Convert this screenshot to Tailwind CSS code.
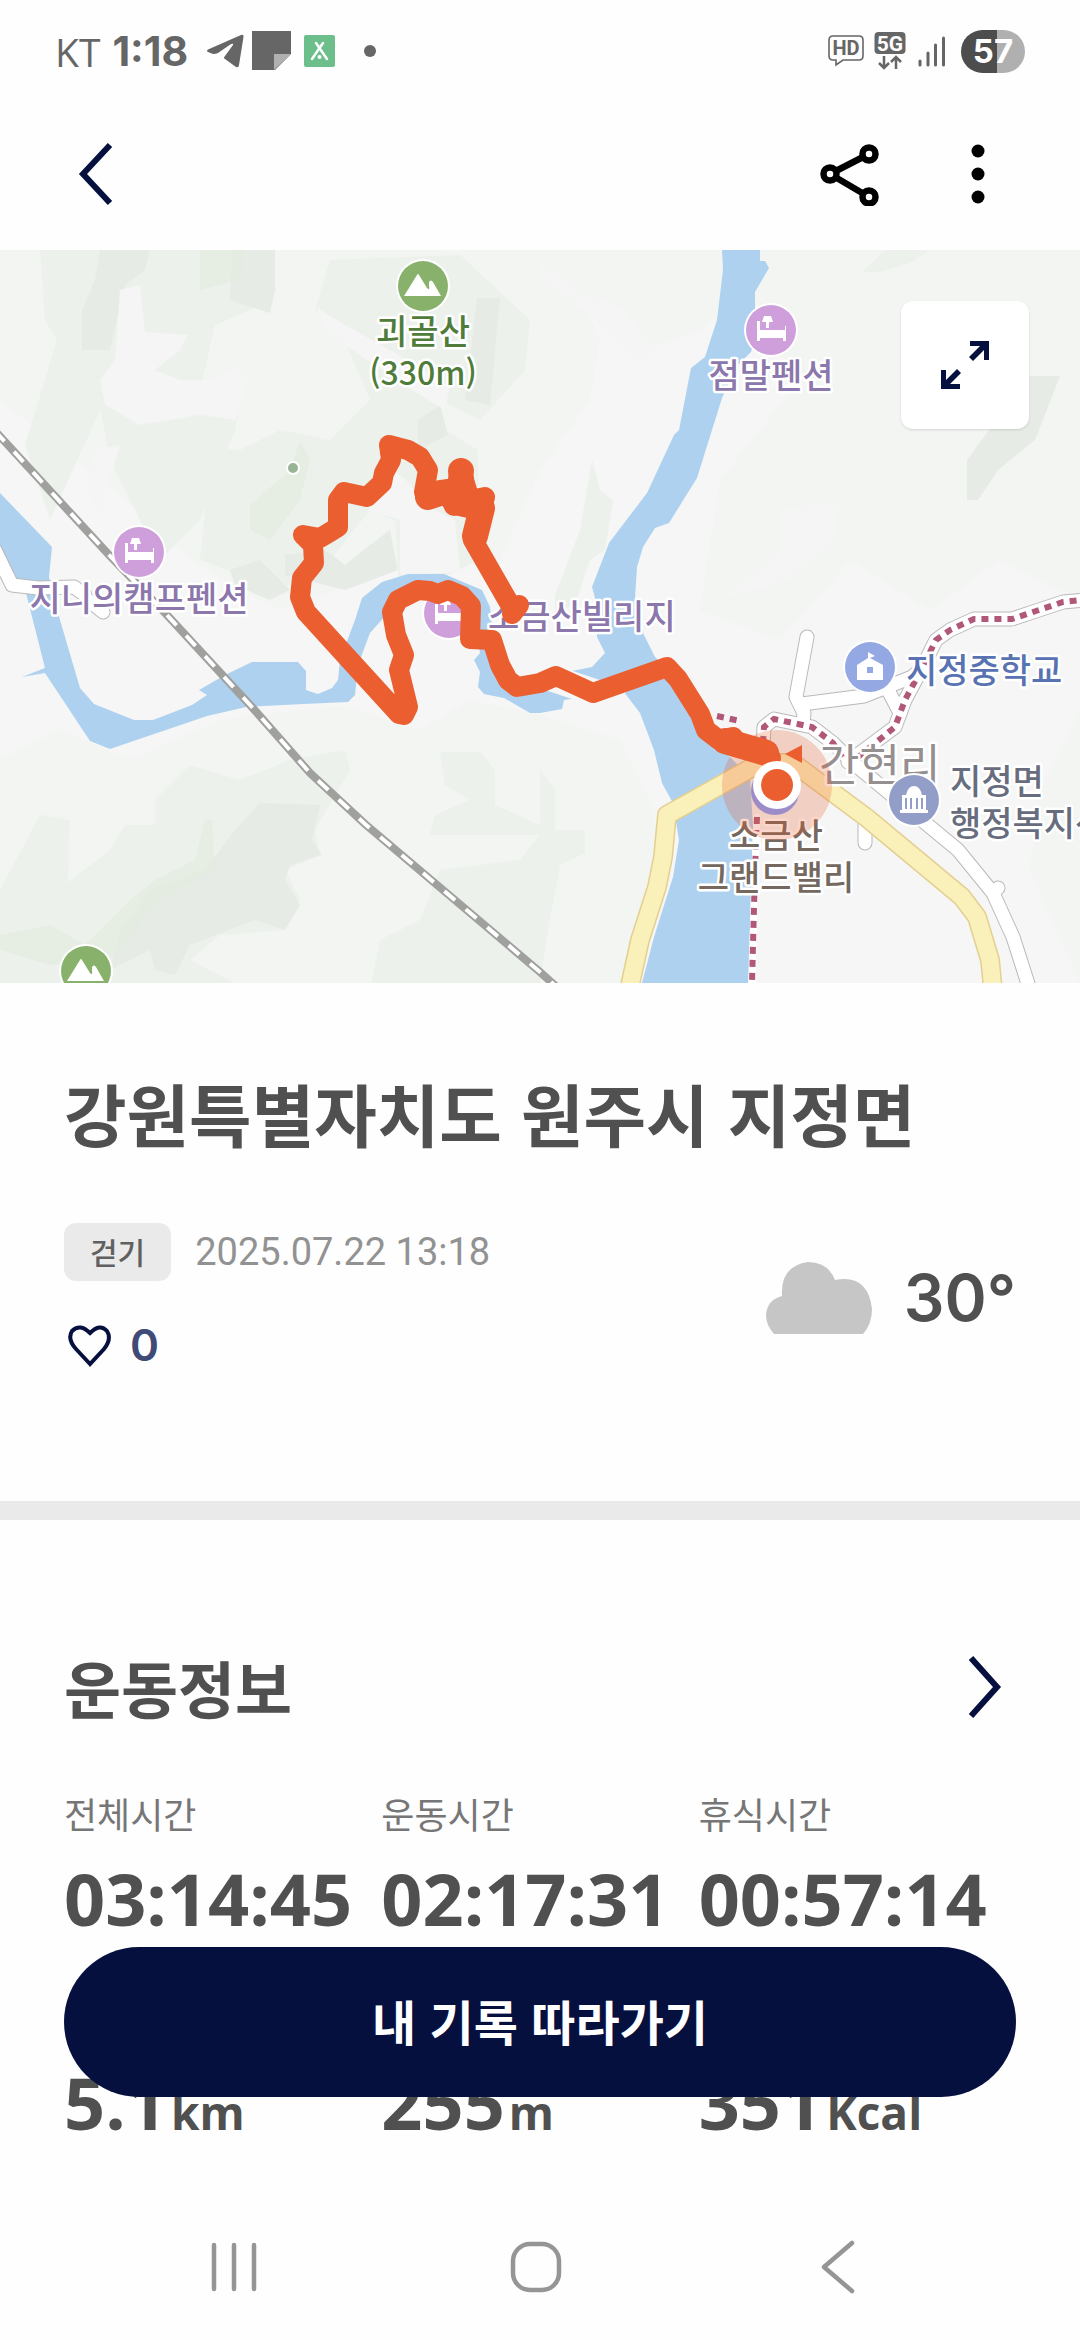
<!DOCTYPE html>
<html lang="ko">
<head>
    <meta charset="UTF-8">
    <meta name="viewport" content="width=device-width, initial-scale=1">
    <script src="https://cdn.jsdelivr.net/npm/@tailwindcss/browser@4"></script>
    <title>강원특별자치도 원주시 지정면</title>
</head>
<body class="min-h-screen flex flex-col bg-[#fefefe] text-[#505050] font-['Noto_Sans_CJK_KR',sans-serif]">

    <!-- status bar -->
    <div class="flex items-center justify-between h-[102px] pl-[55px] pr-[55px] text-[#666] font-['Inter',sans-serif]">
        <div class="flex items-center">
            <span class="text-[39px] leading-none font-normal font-['Open_Sans',sans-serif]">KT</span>
            <span class="ml-3 text-[41px] leading-none font-bold">1:18</span>
            <svg class="ml-[18px] w-[38px] h-[34px]" viewBox="0 0 38 34" fill="currentColor"><path d="M35 1 Q38 0 37.500 3 L33 31 Q32.500 34 30 33 L19 25 Q17 24 19 22 L27 11 Q28 9 25 10 L12 19 Q10 20 7 20 L2 18 Q0 17 2 15.500 Z"/></svg>
            <svg class="ml-2 w-10 h-10" viewBox="0 0 40 40"><path fill="#666" d="M0 0H39V23L23 39H0Z"/><path fill="#b0b0b0" d="M22 23H39L22 39Z"/></svg>
            <svg class="ml-3 w-8 h-8" viewBox="0 0 32 32"><rect width="31" height="32" rx="2" fill="#6cbe8b"/><path d="M8 24L19 8M23 24L12 8" stroke="#fff" stroke-width="2.500" stroke-linecap="round"/><circle cx="15.500" cy="22" r="2" fill="#fff"/></svg>
            <span class="ml-7 size-3 rounded-full bg-[#666]"></span>
        </div>
        <div class="flex items-center">
            <svg class="w-9 h-8" viewBox="0 0 36 32"><path d="M5 1H31Q35 1 35 5V21Q35 25 31 25H15L8 30V25H5Q1 25 1 21V5Q1 1 5 1Z" fill="none" stroke="#666" stroke-width="1.600"/><text x="18" y="20" text-anchor="middle" font-size="20" font-weight="700" font-family="Roboto, sans-serif" fill="#666">HD</text></svg>
            <svg class="ml-[10px] w-8 h-[38px]" viewBox="0 0 32 38"><rect x="0.500" width="31" height="22" rx="4" fill="#666"/><text x="16" y="19" text-anchor="middle" font-size="21" font-weight="700" font-family="Roboto, sans-serif" fill="#fff">5G</text><path d="M10 24V36M5 31L10 36L15 31M22 37V25M17 30L22 25L27 30" fill="none" stroke="#666" stroke-width="2.500"/></svg>
            <svg class="ml-3 w-7 h-8" viewBox="0 0 28 32"><path d="M2 26V30M10 18V30M17.500 10V30M25.500 3V30" stroke="#666" stroke-width="3" stroke-linecap="round"/></svg>
            <span class="ml-[15px] flex items-center justify-center w-16 h-[43px] rounded-full text-white text-[33px] leading-none font-bold bg-linear-to-r from-[#4d4d4d] from-57% to-[#b0b0b0] to-57%">57</span>
        </div>
    </div>

    <!-- app bar -->
    <header class="flex items-center justify-between h-[148px] px-[71px] pb-1">
        <button aria-label="뒤로" class="flex justify-center">
            <svg class="w-12 h-16" viewBox="0 0 48 64"><path d="M39 3L12 32L39 61" fill="none" stroke="#06103f" stroke-width="6"/></svg>
        </button>
        <div class="flex items-center gap-[68px]">
            <button aria-label="공유">
                <svg class="w-[62px] h-16" viewBox="0 0 62 64"><path d="M11 32L50 12M11 32L50 55" stroke="#000" stroke-width="6.500"/><g fill="#fff" stroke="#000" stroke-width="6.500"><circle cx="11" cy="32" r="6.500"/><circle cx="50" cy="12" r="6.500"/><circle cx="50" cy="55" r="6.500"/></g></svg>
            </button>
            <button aria-label="더보기">
                <svg class="w-[60px] h-16" viewBox="0 0 60 64"><circle cx="29" cy="9" r="6.500"/><circle cx="29" cy="32" r="6.500"/><circle cx="29" cy="55" r="6.500"/></svg>
            </button>
        </div>
    </header>

    <!-- map -->
    <section class="relative">
        <svg class="block w-full" viewBox="0 250 1080 733" font-family="'Noto Sans CJK KR', sans-serif">
            <defs>
                <g id="bed"><circle r="27" fill="#fff"/><circle r="25" fill="#cf9fdb"/><path fill="#fff" d="M-14 -9H-11V0H14V-4H15V11H12V8H-11V11H-14ZM-7 -14H0L2 -8H-2V-2H-5V-8H-9Z"/></g>
                <g id="mountain"><circle r="27" fill="#fff"/><circle r="25" fill="#88b26c"/><path fill="#fff" d="M-19 10L-6 -11Q-5 -13 -4 -11L4 2Q7 5 6 0L6 -4Q8 -7 10 -4L18 10Z"/></g>
            </defs>
            <rect y="250" width="1080" height="733" fill="#f5f6f5"/>

            <!-- terrain -->
            <path fill="#f2f5f2" d="M0 250H560L600 340L590 400L540 470L500 560L420 560L340 590L280 610L240 590L190 560L160 530L90 470L0 400ZM540 250H1080V600L1000 560L930 610L850 560L780 640L700 610L720 480L800 380L740 300L700 330L640 350L560 290ZM0 760L60 730L130 760L220 720L340 705L420 730L470 700L540 715L620 740L650 800L665 870L640 983H0ZM1080 710L1040 790L1030 870L1080 983Z"/>
            <path fill="#ecf1ec" d="M40 250H270L276 290L250 310L215 325L200 390L245 370L235 430L200 520L160 560L110 460L95 380L125 300L115 290L100 410L50 520L25 445L57 340L45 320ZM185 445L240 450L280 430L330 440L370 400L340 330L315 310L330 260L460 255L530 320L525 370L480 420L440 400L445 430L478 450L478 560L400 600L395 520L370 510L330 560L280 590L200 560L205 510L180 470ZM0 890L40 815L70 820L68 883L110 850L125 825L155 825L155 800L190 765L240 780L290 760L345 750L350 770L315 830L320 855L285 870L300 900L285 930L220 935L190 960L235 983H0ZM440 752H480L495 770L495 805L540 825V990H370L380 940L420 920L440 870L520 860L540 835L430 835L435 815L470 800L445 785ZM540 770L555 790L555 830L585 830V853L560 865L548 930L540 983ZM555 612L555 595L580 530L592 460L600 490L613 500L605 550L590 560L575 605ZM862 272L885 250H930L910 263L880 272Z"/>
            <path fill="#e6ebe6" d="M100 250H150L145 270L125 285L110 350H82V310L95 280ZM232 250H275L275 290L270 313L230 300ZM477 298H500L490 405L465 400ZM260 803L320 805L312 840L322 855L290 865L285 880L300 905L285 930L255 920L190 945L175 975L155 970L150 950L110 970L120 930L150 890L205 870L235 830ZM967 460V500L978 500L998 470L1035 440L1060 376H1030L1000 415ZM285 555L325 550L345 565L370 545L390 530L398 570L345 590L285 575ZM418 420L440 405L448 435L418 450ZM270 600L235 585L230 570L260 560L290 590Z"/>
            <path fill="#e3ede0" opacity=".6" d="M200 250H245L240 280L200 290ZM250 505L290 470L300 440L310 460L300 500L270 540L250 530ZM0 935L50 925L85 945L130 900L155 880L195 860L205 820L212 820L215 870L160 900L110 960L50 965L0 950Z"/>
            <path fill="#f4f5f4" d="M120 290L140 285L145 332L188 335L180 350L155 370L180 380L210 380L240 365L250 375L235 420L200 415L140 425L105 405L100 380L115 360ZM316 307L345 325L390 350L450 385L445 410L420 395L330 335ZM95 450L120 445L100 510L85 490ZM408 482L388 465L384 485L368 510L400 520V575L460 572L455 520L425 505ZM540 260L580 290L625 310L655 350L640 360L590 315L540 280ZM780 510L840 500L835 540L790 580L720 600L780 550Z"/>

            <!-- water -->
            <path fill="#aed1ef" d="M0 493L52 547L49 577L52 590L60 620L80 688L94 704L134 720H153L192 705L207 695L199 690L225 675L252 662H298L306 671V690L318 694L332 688L338 680L340 660L355 620L362 598L382 582L408 574H444L482 590L490 607L494 640L520 680L577 670L592 667L605 653L597 637L595 598L592 587L609 543L647 493L674 435L679 430L691 368L705 357L717 320L723 270L722 250H760V261H765L769 268L755 292V340L751 352L736 367L722 398L697 478L669 523L655 528L643 547L637 567L635 598L643 633L655 657L700 700L712 743L726 753L750 777L753 827L751 893L748 983H642L654 937L673 877L679 840L673 803L662 783L654 750L640 713L624 692L585 697L564 700L562 709L540 713H530L504 698L484 694L478 687L480 672L474 660L480 653L478 640L470 605L450 590L420 592L395 605L370 633L358 665L355 695L348 702L303 704L246 707L207 716L110 749L90 741L45 673L22 677L45 668L26 593L0 570Z"/>
            <path fill="#f5f6f5" d="M485 640L500 685L517 697L545 690L590 705L625 693L640 680L600 680L555 665L520 670L505 655ZM0 560L10 590L24 594L30 620L0 620Z"/>

            <!-- local roads -->
            <g fill="none" stroke-linejoin="round" stroke-linecap="round">
                <g stroke="#b9b9b9" stroke-width="15">
                    <path d="M-5 550L12 585L38 588L74 587L85 595M88 600L103 612"/>
                    <path d="M807 637L796 697L804 713L803 722M802 704L864 696L912 677L926 665M888 690L900 713M865 818V843"/>
                    <path d="M763 750L764 727L774 719L812 727L833 743L853 763L900 802L958 850L993 893L1013 937L1030 990M993 893L998 888"/>
                    <path d="M848 762L895 727L905 700L920 672L936 640L950 630L974 619H1012L1039 610L1063 602L1085 600"/>
                </g>
                <g stroke="#fff" stroke-width="13">
                    <path d="M-5 550L12 585L38 588L74 587L85 595M88 600L103 612"/>
                    <path d="M807 637L796 697L804 713L803 722M802 704L864 696L912 677L926 665M888 690L900 713M865 818V843"/>
                    <path d="M763 750L764 727L774 719L812 727L833 743L853 763L900 802L958 850L993 893L1013 937L1030 990M993 893L998 888"/>
                    <path d="M848 762L895 727L905 700L920 672L936 640L950 630L974 619H1012L1039 610L1063 602L1085 600"/>
                </g>
                <path d="M757 817L755 870L752 990" stroke="#fff" stroke-width="7"/>
            </g>

            <!-- main road -->
            <g fill="none" stroke-linejoin="round">
                <path d="M629 990L640 940L657 887L663 857L667 815L760 763H793L867 818L962 897L977 917L990 960L993 990" stroke="#e4cf90" stroke-width="20"/>
                <path d="M629 990L640 940L657 887L663 857L667 815L760 763H793L867 818L962 897L977 917L990 960L993 990" stroke="#faf0ba" stroke-width="17"/>
            </g>

            <!-- walking trails -->
            <g fill="none" stroke="#b1587a" stroke-width="6" stroke-dasharray="7 6">
                <path d="M763 743L764 727L774 719L812 727L833 743L845 762"/>
                <path d="M858 757L895 727L905 700L920 672L936 640L950 630L974 619H1012L1039 610L1063 602L1080 600"/>
                <path d="M757 817L755 870L752 983M717 716L740 721"/>
            </g>

            <!-- railway -->
            <g fill="none">
                <path d="M-5 431L110 556L167 615L251 706L310 773L365 824L540 972L560 990" stroke="#a0a09e" stroke-width="8"/>
                <path d="M-5 431L110 556L167 615L251 706L310 773L365 824L540 972L560 990" stroke="#fff" stroke-width="4" stroke-dasharray="14 14"/>
            </g>

            <circle cx="293" cy="468" r="6" fill="#98b496" stroke="#fff" stroke-width="2"/>
            <use href="#mountain" x="423" y="286"/>
            <use href="#mountain" x="86" y="971"/>
            <use href="#bed" x="139" y="552"/>
            <use href="#bed" x="771" y="330"/>
            <use href="#bed" x="449" y="613"/>
            <g transform="translate(870 667)"><circle r="27" fill="#fff"/><circle r="25" fill="#94a9e4"/><path fill="#fff" fill-rule="evenodd" d="M-13 13V-2L-2 -9V-15L5 -11L0 -9L13 -2V13ZM-3 0V6H3V0Z"/></g>

            <!-- place names -->
            <g font-size="34" font-weight="500" stroke="#fff" stroke-width="5" stroke-linejoin="round" paint-order="stroke">
                <g text-anchor="middle">
                    <text x="423" y="344" fill="#4f7c3a">괴골산</text>
                    <text x="423" y="385" font-size="32" fill="#4f7c3a">(330m)</text>
                    <text x="771" y="388" fill="#8c77ac">점말펜션</text>
                    <text x="139" y="611" fill="#8c77ac">지니의캠프펜션</text>
                    <text x="776" y="848" fill="#74685f">소금산</text>
                    <text x="776" y="890" fill="#74685f">그랜드밸리</text>
                </g>
                <text x="488" y="629" fill="#8c77ac">소금산빌리지</text>
                <text x="906" y="683" fill="#5872b2">지정중학교</text>
                <text x="819" y="781" font-size="44" font-weight="400" fill="#958f90">간현리</text>
                <text x="950" y="794" fill="#686d7e">지정면</text>
                <text x="950" y="836" fill="#686d7e">행정복지센터</text>
            </g>
            <g transform="translate(914 800)"><circle r="27" fill="#fff"/><circle r="25" fill="#929ec7"/><path fill="#fff" d="M-14 13V10H-12V-5H-8Q-6 -14 0 -14T8 -5H12V10H14V13Z"/><path stroke="#929ec7" stroke-width="2" d="M-8 -2V9M-3 -2V9M3 -2V9M8 -2V9"/></g>

            <!-- recorded route -->
            <circle cx="777" cy="785" r="55" fill="#ea5d2e" opacity=".25"/>
            <path fill="none" stroke="#ea5e30" stroke-width="20" stroke-linejoin="round" stroke-linecap="round" d="M512 614L519 605L512 608L473 540L476 523L484 500L485 497L470 500L461 470L463 480L460 500L454 506L447 492L438 495L424 492L428 470L420 457L408 450L389 445L391 460L384 473L382 483L367 497L344 492L338 500V527L330 532L320 538L303 535L313 545L314 563L302 578L300 597L306 612L399 714L404 715L408 707L399 670L404 655L396 635L392 612L398 600L418 590L430 591L438 594L448 590L462 596L471 606L470 639L492 640L500 665L508 680L517 687L540 683L556 676L593 693L667 667L678 679L700 714L706 730L719 740L733 737L741 748L764 749L771 758"/>
            <path fill="none" stroke="#ea5e30" stroke-width="26" stroke-linejoin="round" stroke-linecap="round" d="M461 479V490L440 493L428 497M456 502L482 508L475 536M725 741L766 753"/>
            <circle cx="461" cy="471" r="13" fill="#ea5e30"/>
            <circle cx="775" cy="791" r="24" fill="#9c8dc8"/>
            <circle cx="777" cy="785" r="24" fill="#fff"/>
            <circle cx="777" cy="785" r="16" fill="#ea5e30"/>
            <path fill="#ea5e30" d="M785 754L802 745V763Z"/>
        </svg>
        <button aria-label="지도 확대" class="absolute top-[51px] right-[51px] size-32 flex items-center justify-center rounded-xl bg-white shadow-sm">
            <svg class="size-12" viewBox="0 0 48 48"><path fill="#06103f" d="M29 0H48V19H43V9L32 20L28 16L39 5H29ZM0 29H5V39L16 28L20 32L9 43H19V48H0Z"/></svg>
        </button>
    </section>

    <!-- record summary -->
    <section class="px-16 pt-20 pb-32">
        <h1 class="text-[68px] leading-[100px] font-bold">강원특별자치도 원주시 지정면</h1>
        <div class="mt-[60px] flex items-center justify-between">
            <div>
                <div class="flex items-center gap-6">
                    <span class="flex items-center h-[58px] px-[26px] pb-[2px] rounded-xl bg-[#eaeaea] text-[30px] leading-none font-medium text-[#606060]">걷기</span>
                    <time class="text-[38px] leading-none text-[#929292] font-['Roboto',sans-serif]">2025.07.22 13:18</time>
                </div>
                <button aria-label="좋아요" class="mt-9 flex items-center gap-4">
                    <svg class="w-[50px] h-[56px]" viewBox="0 0 50 56"><path d="M26 47L12 32Q3 22 8 14Q16 6 26 16Q36 6 43 14Q48 22 40 32Z" fill="none" stroke="#06103f" stroke-width="4"/></svg>
                    <span class="text-[44px] leading-none font-semibold text-[#3f4a76] font-['Inter',sans-serif]">0</span>
                </button>
            </div>
            <div class="flex items-center gap-8">
                <svg class="w-[106px] h-[72px]" viewBox="0 0 106 72"><path fill="#c6c6c6" d="M8 72Q0 63 0 53Q1 38 16 34Q14 4 42 0Q62 0 69 18Q102 12 106 47Q106 62 97 72Z"/></svg>
                <span class="text-[64px] leading-none font-semibold font-['Inter',sans-serif]">30°</span>
            </div>
        </div>
    </section>

    <div class="h-[19px] bg-[#eaeaea]"></div>

    <!-- workout info -->
    <section class="px-16 pt-[122px]">
        <div class="flex items-center justify-between">
            <h2 class="text-[62px] leading-[90px] font-bold">운동정보</h2>
            <button aria-label="운동정보 더보기">
                <svg class="w-[50px] h-16" viewBox="0 0 50 64"><path d="M5 3L31 32L5 61" fill="none" stroke="#06103f" stroke-width="6"/></svg>
            </button>
        </div>
        <dl class="mt-[54px] grid grid-cols-3">
            <div>
                <dt class="text-[36px] leading-[54px] text-[#767676]">전체시간</dt>
                <dd class="mt-2 text-[72px] leading-[100px] font-bold font-['Open_Sans',sans-serif]">03:14:45</dd>
            </div>
            <div>
                <dt class="text-[36px] leading-[54px] text-[#767676]">운동시간</dt>
                <dd class="mt-2 text-[72px] leading-[100px] font-bold font-['Open_Sans',sans-serif]">02:17:31</dd>
            </div>
            <div>
                <dt class="text-[36px] leading-[54px] text-[#767676]">휴식시간</dt>
                <dd class="mt-2 text-[72px] leading-[100px] font-bold font-['Open_Sans',sans-serif]">00:57:14</dd>
            </div>
        </dl>
        <div class="mt-[104px] grid grid-cols-3 text-[72px] leading-[100px] font-bold font-['Open_Sans',sans-serif]">
            <p>5.1<span class="ml-1 text-[46px] leading-none">km</span></p>
            <p>255<span class="ml-1 text-[46px] leading-none">m</span></p>
            <p>351<span class="ml-1 text-[46px] leading-none">Kcal</span></p>
        </div>
    </section>

    <button class="fixed inset-x-16 bottom-[243px] h-[150px] pb-1 rounded-full bg-[#06103f] text-white text-[48px] leading-none font-bold">내 기록 따라가기</button>

    <!-- system navigation -->
    <nav class="mt-auto flex items-center justify-center gap-[246px] h-[146px] pr-2 text-[#959595]">
        <button aria-label="최근 앱"><svg class="size-14" viewBox="0 0 56 56"><path d="M8 6V50M28 6V50M48 6V50" stroke="currentColor" stroke-width="4.500" stroke-linecap="round"/></svg></button>
        <button aria-label="홈"><svg class="size-14" viewBox="0 0 56 56"><rect x="5" y="5" width="46" height="46" rx="17" fill="none" stroke="currentColor" stroke-width="4.500"/></svg></button>
        <button aria-label="뒤로 가기"><svg class="size-14" viewBox="0 0 56 56"><path d="M42 4L14 28L42 52" fill="none" stroke="currentColor" stroke-width="4.500" stroke-linecap="round" stroke-linejoin="round"/></svg></button>
    </nav>
</body>
</html>
